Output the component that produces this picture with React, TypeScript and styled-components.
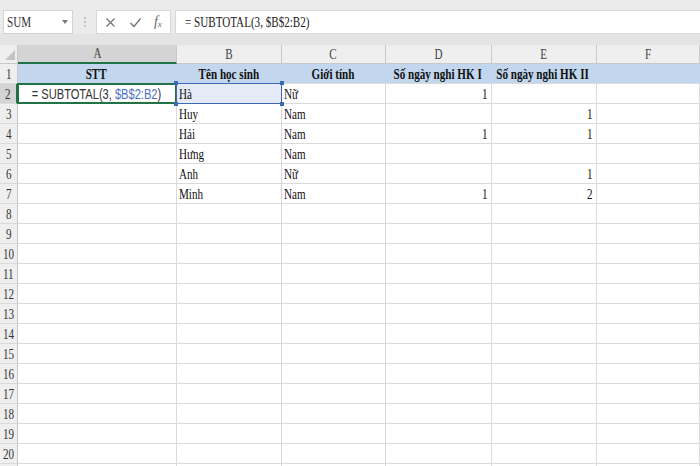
import React from 'react';
import styled, { createGlobalStyle, css } from 'styled-components';

const GlobalStyle = createGlobalStyle`
  html, body { margin: 0; padding: 0; background: #fff; overflow: hidden; }
  body { font-family: "Liberation Serif", "Times New Roman", serif; color: #111; }
`;

const SQUEEZE = 0.74;

const Page = styled.div`
  width: 700px;
  height: 466px;
  overflow: hidden;
  background: #ebebeb;
  display: flex;
  flex-direction: column;
`;

const FormulaRow = styled.div`
  flex: 0 0 24px;
  margin-top: 10px;
  display: flex;
  align-items: stretch;
  padding-left: 3px;
`;

const NameBox = styled.div`
  width: 70px;
  box-sizing: border-box;
  background: #fff;
  border: 1px solid #d2d2d2;
  display: flex;
  align-items: center;
  justify-content: space-between;
  padding: 0 4px 0 3px;
  font-size: 15px;
  color: #333;
`;

const Caret = styled.span`
  width: 0;
  height: 0;
  border-left: 3px solid transparent;
  border-right: 3px solid transparent;
  border-top: 4px solid #7a7a7a;
`;

const Dots = styled.div`
  width: 23px;
  display: flex;
  flex-direction: column;
  align-items: center;
  justify-content: center;
  gap: 2px;
  & > i {
    width: 2px;
    height: 2px;
    background: #c4c4c4;
    display: block;
  }
`;

const IconBox = styled.div`
  width: 75px;
  box-sizing: border-box;
  background: #fff;
  border: 1px solid #d8d8d8;
  display: flex;
  align-items: center;
  justify-content: space-around;
  padding: 0 2px;
  color: #707070;
`;

const Fx = styled.span`
  font-family: "Liberation Serif", serif;
  font-style: italic;
  font-size: 14px;
  color: #6a6a6a;
  & > sub {
    font-size: 9px;
    vertical-align: -1px;
  }
`;

const FormulaInput = styled.div`
  flex: 1;
  margin-left: 4px;
  background: #fff;
  border-top: 1px solid #d8d8d8;
  border-bottom: 1px solid #d8d8d8;
  border-left: 1px solid #d8d8d8;
  display: flex;
  align-items: center;
  padding-left: 9px;
  font-size: 15px;
  color: #222;
`;

const Gap = styled.div`
  flex: 0 0 11px;
  background: #e4e4e4;
`;

const Sheet = styled.div`
  flex: 1 1 auto;
  min-height: 0;
  overflow: hidden;
  display: flex;
  flex-direction: column;
  background: #fff;
`;

const Row = styled.div<{ $h: number }>`
  display: flex;
  flex: 0 0 ${p => p.$h}px;
`;

const Txt = styled.span<{ $origin?: string }>`
  display: inline-block;
  white-space: nowrap;
  transform: scaleX(${SQUEEZE});
  transform-origin: ${p => p.$origin ?? 'left'} center;
`;

const Corner = styled.div`
  flex: 0 0 18px;
  box-sizing: border-box;
  background: #efefef;
  border-right: 1px solid #c9c9c9;
  border-bottom: 1px solid #c9c9c9;
  display: flex;
  align-items: flex-end;
  justify-content: flex-end;
  padding: 0 2px 3px 0;
`;

const CornerTri = styled.span`
  width: 0;
  height: 0;
  border-left: 10px solid transparent;
  border-bottom: 10px solid #c4c4c4;
`;

const ColHead = styled.div<{ $w?: number; $sel?: boolean }>`
  ${p => (p.$w ? css`flex: 0 0 ${p.$w}px;` : css`flex: 1 1 auto;`)}
  min-width: 0;
  box-sizing: border-box;
  background: ${p => (p.$sel ? '#d4d4d4' : '#efefef')};
  border-right: 1px solid #c9c9c9;
  border-bottom: ${p => (p.$sel ? '2px solid #217346' : '1px solid #c9c9c9')};
  display: flex;
  align-items: center;
  justify-content: center;
  font-size: 15px;
  color: #444;
  line-height: 17px;
`;

const RowHead = styled.div<{ $sel?: boolean }>`
  flex: 0 0 18px;
  min-width: 0;
  box-sizing: border-box;
  background: ${p => (p.$sel ? '#d4d4d4' : '#efefef')};
  border-right: ${p => (p.$sel ? '2px solid #217346' : '1px solid #c9c9c9')};
  border-bottom: 1px solid #dadada;
  display: flex;
  justify-content: center;
  padding-top: 2px;
  font-size: 15px;
  line-height: 16px;
  color: #333;
`;

type Align = 'left' | 'right' | 'center';

const justify = { left: 'flex-start', right: 'flex-end', center: 'center' };

const Cell = styled.div<{ $w?: number; $align: Align; $fill?: string; $bold?: boolean; $active?: boolean }>`
  ${p => (p.$w ? css`flex: 0 0 ${p.$w}px;` : css`flex: 1 1 auto;`)}
  min-width: 0;
  position: relative;
  box-sizing: border-box;
  background: ${p => p.$fill ?? '#fff'};
  border-right: 1px solid ${p => p.$fill ?? '#dadada'};
  border-bottom: 1px solid #dadada;
  display: flex;
  justify-content: ${p => justify[p.$align]};
  padding: 2px 3px 0 2px;
  font-size: 15px;
  line-height: 16px;
  font-weight: ${p => (p.$bold ? 700 : 400)};
  color: #111;
  ${p =>
    p.$active &&
    css`
      &::after {
        content: '';
        position: absolute;
        left: -1px;
        top: -1px;
        right: -1px;
        bottom: -1px;
        border: 2px solid #217346;
        pointer-events: none;
        z-index: 2;
      }
    `}
`;

const SansFormula = styled.span`
  font-family: "Liberation Sans", Arial, sans-serif;
  font-size: 15px;
  color: #333;
`;

const RefPart = styled.span`
  color: #4a72c0;
`;

const RefFrame = styled.div`
  position: absolute;
  left: -1px;
  top: -1px;
  right: -1px;
  bottom: -1px;
  border: 1.5px solid #3e67b8;
  pointer-events: none;
  z-index: 3;
`;

const Handle = styled.span<{ $x: 'left' | 'right'; $y: 'top' | 'bottom' }>`
  position: absolute;
  width: 4px;
  height: 4px;
  background: #3e67b8;
  ${p => p.$x}: -3px;
  ${p => p.$y}: -3px;
`;

const COLS = [159, 105, 104, 105.5, 105];
const LETTERS = ['A', 'B', 'C', 'D', 'E', 'F'];

type Val = string | number;
const header: Val[] = ['STT', 'Tên học sinh', 'Giới tính', 'Số ngày nghi HK I', 'Số ngày nghi HK II', ''];
const data: Val[][] = [
  ['', 'Hà', 'Nữ', 1, '', ''],
  ['', 'Huy', 'Nam', '', 1, ''],
  ['', 'Hải', 'Nam', 1, 1, ''],
  ['', 'Hưng', 'Nam', '', '', ''],
  ['', 'Anh', 'Nữ', '', 1, ''],
  ['', 'Minh', 'Nam', 1, 2, ''],
];

const LABELLED_ROWS = 20;
const TOTAL_ROWS = 21;

const CrossIcon = () => (
  <svg width="11" height="11" viewBox="0 0 11 11">
    <path d="M1.5 1.5 L9.5 9.5 M9.5 1.5 L1.5 9.5" stroke="#6f6f6f" strokeWidth="1.1" fill="none" />
  </svg>
);

const CheckIcon = () => (
  <svg width="13" height="11" viewBox="0 0 13 11">
    <path d="M1.5 6 L5 9.5 L11.5 1.5" stroke="#6f6f6f" strokeWidth="1.2" fill="none" />
  </svg>
);

export default function App() {
  const rows: React.ReactNode[] = [];
  for (let r = 1; r <= TOTAL_ROWS; r++) {
    const cells: React.ReactNode[] = [];
    for (let c = 0; c < 6; c++) {
      const w = COLS[c];
      if (r === 1) {
        const v = header[c];
        cells.push(
          <Cell key={c} $w={w} $align="center" $fill="#c2d7ee" $bold>
            {v !== '' && <Txt $origin="center">{v}</Txt>}
          </Cell>
        );
      } else if (r === 2 && c === 0) {
        cells.push(
          <Cell key={c} $w={w} $align="center" $active>
            <Txt $origin="center">
              <SansFormula>
                = SUBTOTAL(3, <RefPart>$B$2:B2</RefPart>)
              </SansFormula>
            </Txt>
          </Cell>
        );
      } else {
        const v = r - 2 < data.length ? data[r - 2][c] : '';
        const isNum = typeof v === 'number';
        const isRef = r === 2 && c === 1;
        cells.push(
          <Cell key={c} $w={w} $align={isNum ? 'right' : 'left'} $fill={isRef ? '#e5ebf6' : undefined}>
            {v !== '' && <Txt $origin={isNum ? 'right' : 'left'}>{v}</Txt>}
            {isRef && (
              <RefFrame>
                <Handle $x="left" $y="top" />
                <Handle $x="right" $y="top" />
                <Handle $x="left" $y="bottom" />
                <Handle $x="right" $y="bottom" />
              </RefFrame>
            )}
          </Cell>
        );
      }
    }
    rows.push(
      <Row key={r} $h={20}>
        <RowHead $sel={r === 2}>
          {r <= LABELLED_ROWS && <Txt $origin="center">{r}</Txt>}
        </RowHead>
        {cells}
      </Row>
    );
  }

  return (
    <>
      <GlobalStyle />
      <Page>
        <FormulaRow>
          <NameBox>
            <Txt>SUM</Txt>
            <Caret />
          </NameBox>
          <Dots>
            <i />
            <i />
            <i />
          </Dots>
          <IconBox>
            <CrossIcon />
            <CheckIcon />
            <Fx>
              f<sub>x</sub>
            </Fx>
          </IconBox>
          <FormulaInput>
            <Txt>= SUBTOTAL(3, $B$2:B2)</Txt>
          </FormulaInput>
        </FormulaRow>
        <Gap />
        <Sheet>
          <Row $h={19}>
            <Corner>
              <CornerTri />
            </Corner>
            {LETTERS.map((l, i) => (
              <ColHead key={l} $w={COLS[i]} $sel={i === 0}>
                <Txt $origin="center">{l}</Txt>
              </ColHead>
            ))}
          </Row>
          {rows}
        </Sheet>
      </Page>
    </>
  );
}
